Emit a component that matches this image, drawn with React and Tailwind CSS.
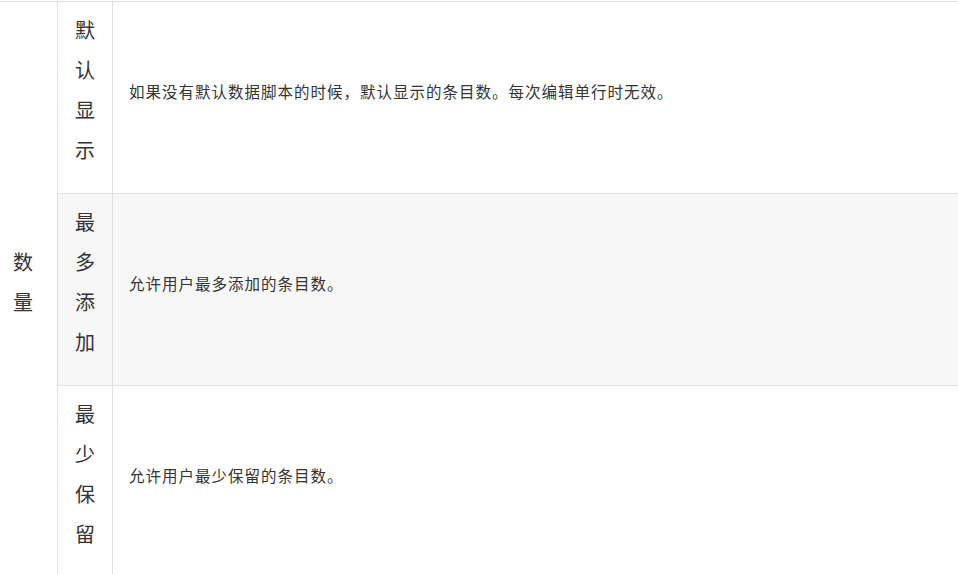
const rows = [
  {
    label: '默认显示',
    text: '如果没有默认数据脚本的时候，默认显示的条目数。每次编辑单行时无效。',
    bg: 'bg-white',
  },
  {
    label: '最多添加',
    text: '允许用户最多添加的条目数。',
    bg: 'bg-[#f7f7f7]',
  },
  {
    label: '最少保留',
    text: '允许用户最少保留的条目数。',
    bg: 'bg-white',
  },
];

function Stacked({ text }) {
  return (
    <div className="flex flex-col items-center text-[20px] leading-[40px]">
      {text.split('').map((ch, i) => (
        <span key={i}>{ch}</span>
      ))}
    </div>
  );
}

export default function App() {
  return (
    <div
      className="min-h-screen bg-white pt-[1px] text-[#333] overflow-hidden"
      style={{ fontFamily: '"Noto Sans CJK SC", "Noto Sans", sans-serif' }}
    >
      <div className="flex border-t border-[#e0e0e0]">
        {/* merged first column */}
        <div className="w-[58px] shrink-0 border-r border-[#e0e0e0] pr-[11px] flex items-center justify-center pb-4">
          <Stacked text="数量" />
        </div>

        <div className="flex-1 flex flex-col">
          {rows.map((row) => (
            <div key={row.label} className={`flex h-[192px] border-b border-[#e0e0e0] ${row.bg}`}>
              <div className="w-[55px] shrink-0 border-r border-[#e0e0e0] flex items-center justify-center pb-4">
                <Stacked text={row.label} />
              </div>
              <div className="flex-1 flex items-center pl-[16px] pb-3 text-[15.5px] tracking-[1px] whitespace-nowrap">
                {row.text}
              </div>
            </div>
          ))}
        </div>
      </div>
    </div>
  );
}
